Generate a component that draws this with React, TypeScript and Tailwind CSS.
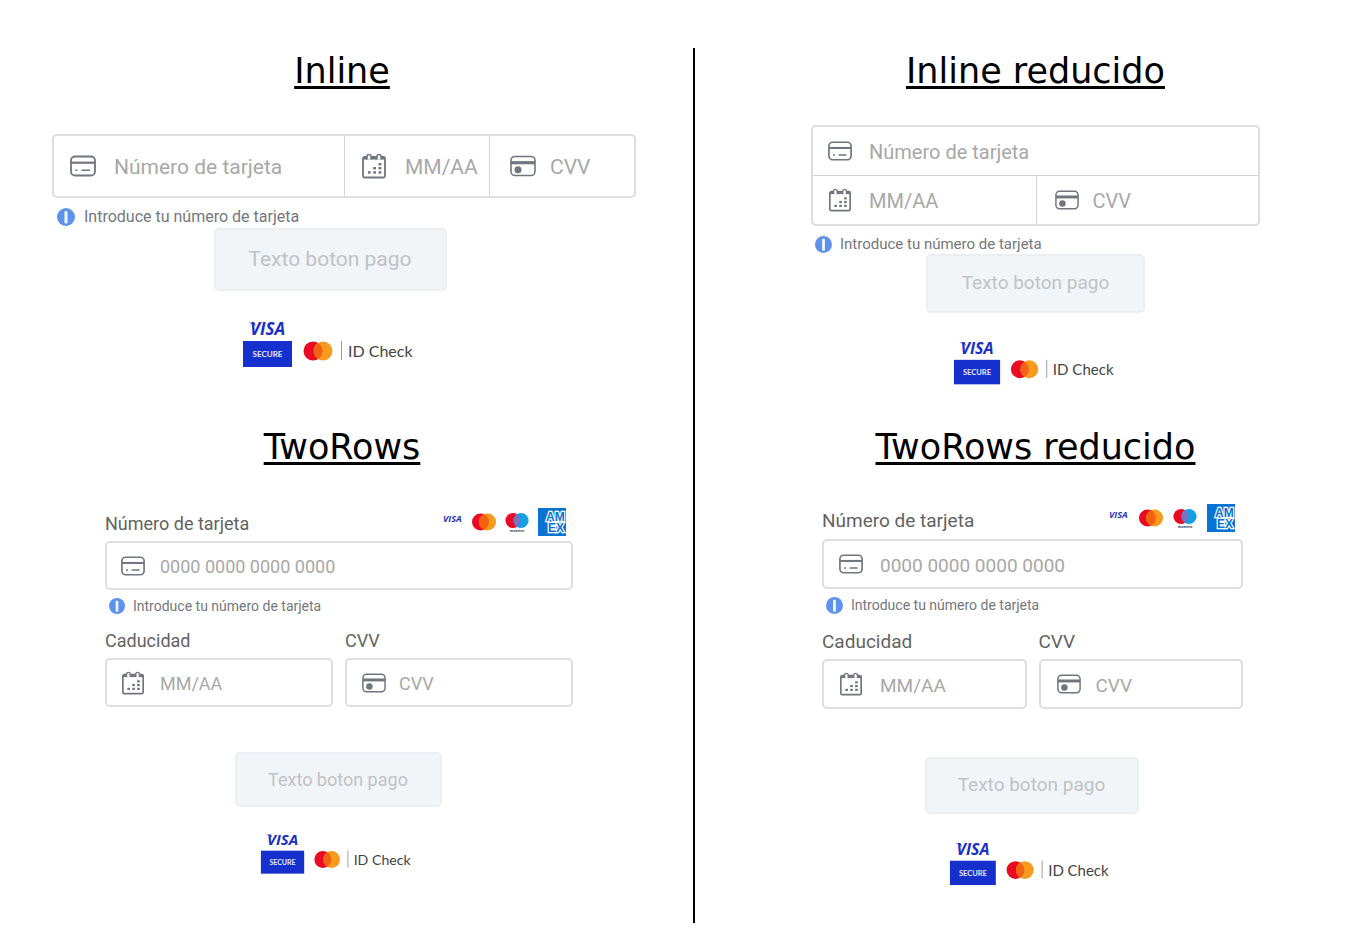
import type { ReactNode } from "react"
import clsx from "clsx"

type Size = {
  field: string
  lead: string
  cvvLead: string
  icon: string
  hint: string
  hintIcon: string
  button: string
  badge: string
}

type RowsSize = Size & {
  label: string
  labelRow: string
  brands: string
  secondRow: string
}

const inline: Size = {
  field: "h-[60px] text-[21px]",
  lead: "pl-4 gap-[18px]",
  cvvLead: "pl-5 gap-3.5",
  icon: "size-[26px]",
  hint: "mt-2 ml-[5px] gap-[9px] text-base leading-[22px]",
  hintIcon: "size-[18px]",
  button: "h-[63px] w-[233px] text-[21px]",
  badge: "mt-[30px] w-[172px]",
}

const inlineReduced: Size = {
  field: "h-12 text-xl",
  lead: "pl-[15px] gap-[17px]",
  cvvLead: "pl-[18px] gap-3.5",
  icon: "size-6",
  hint: "mt-2 ml-1 gap-2 text-[15px] leading-5",
  hintIcon: "size-[17px]",
  button: "h-[59px] w-[219px] text-[19px]",
  badge: "mt-7 w-[162px]",
}

const rows: RowsSize = {
  field: "h-[45px] text-lg",
  lead: "pl-3.5 gap-[15px]",
  cvvLead: "pl-[15px] gap-[13px]",
  icon: "size-6",
  hint: "mt-[7px] ml-1 gap-2 text-sm leading-[18px]",
  hintIcon: "size-4",
  button: "mt-[45px] h-[55px] w-[207px] text-lg",
  badge: "mt-[26px] w-[152px]",
  label: "text-lg leading-6",
  labelRow: "mb-[5px] pr-[7px]",
  brands: "gap-[9px]",
  secondRow: "mt-3.5",
}

const rowsReduced: RowsSize = {
  field: "h-[46px] text-[19px]",
  lead: "pl-[15px] gap-[17px]",
  cvvLead: "pl-4 gap-[15px]",
  icon: "size-6",
  hint: "mt-[7px] ml-1 gap-2 text-sm leading-[18px]",
  hintIcon: "size-[17px]",
  button: "mt-12 h-[57px] w-[214px] text-[19px]",
  badge: "mt-7 w-[161px]",
  label: "text-[19px] leading-[22px]",
  labelRow: "mb-[7px] pr-2",
  brands: "gap-2.5",
  secondRow: "mt-[17px]",
}

function CardIcon({ className }: { className: string }) {
  return (
    <svg viewBox="0 0 26 26" fill="none" stroke="#70757e" className={className} aria-hidden="true">
      <rect x="1" y="3.5" width="24" height="19" rx="4" strokeWidth="1.800" />
      <path d="M1 9.700h24" strokeWidth="2.200" />
      <path d="M5.500 17.300h2M11.500 17.300h8.500" strokeWidth="1.600" />
    </svg>
  )
}

function CalendarIcon({ className }: { className: string }) {
  return (
    <svg viewBox="0 0 26 26" fill="none" stroke="#70757e" className={className} aria-hidden="true">
      <rect x="2" y="4" width="22" height="20.500" rx="1.500" strokeWidth="1.800" />
      <path d="M2 5.500h22" strokeWidth="2.200" />
      <path d="M6 6.500V3.500a2 2 0 0 1 4 0V6.500M16 6.500V3.500a2 2 0 0 1 4 0V6.500" fill="#fff" strokeWidth="1.500" />
      <g fill="#70757e" stroke="none">
        <rect x="17.500" y="10" width="2.800" height="2.400" />
        <rect x="12.200" y="14" width="2.800" height="2.400" />
        <rect x="17.500" y="14" width="2.800" height="2.400" />
        <rect x="6.900" y="18.200" width="2.800" height="2.400" />
        <rect x="12.200" y="18.200" width="2.800" height="2.400" />
        <rect x="17.500" y="18.200" width="2.800" height="2.400" />
      </g>
    </svg>
  )
}

function CvvIcon({ className }: { className: string }) {
  return (
    <svg viewBox="0 0 26 26" fill="none" stroke="#70757e" className={className} aria-hidden="true">
      <rect x="1" y="3.500" width="24" height="19" rx="4" strokeWidth="1.600" />
      <path d="M1 9.700h24" strokeWidth="3.200" />
      <circle cx="8" cy="16.800" r="3.500" fill="#70757e" stroke="none" />
    </svg>
  )
}

function SecureBadges({ className }: { className: string }) {
  return (
    <svg viewBox="0 0 172 47" className={className} role="img" aria-label="Visa Secure, Mastercard ID Check">
      <text x="8" y="14" fill="#1a2fc4" fontFamily="'Open Sans', sans-serif" fontSize="17" fontWeight="700" fontStyle="italic">
        VISA
      </text>
      <path d="M6.500 1.700h6l1.300 3.300c-2-1.800-4.500-2.700-7.300-3.300z" fill="#1a2fc4" />
      <rect x="1" y="20" width="49" height="26" fill="#1530cc" />
      <text x="25.500" y="36" textAnchor="middle" fill="#e4e8fb" fontFamily="Lato, sans-serif" fontSize="8" fontWeight="700">
        SECURE
      </text>
      <circle cx="71" cy="30" r="9.500" fill="#eb0a24" />
      <circle cx="81" cy="30" r="9.500" fill="#f79a1d" />
      <path d="M76 21.900a9.500 9.500 0 0 1 0 16.200a9.500 9.500 0 0 1 0-16.200z" fill="#f26213" />
      <path d="M99.500 20v19" stroke="#999" />
      <text x="106" y="36" fill="#444" fontFamily="Lato, sans-serif" fontSize="16">
        ID Check
      </text>
    </svg>
  )
}

function CardBrands({ className }: { className: string }) {
  return (
    <div className={clsx("flex items-center", className)}>
      <svg viewBox="0 0 21 28" className="h-7 w-[21px]" role="img" aria-label="Visa">
        <text x="1" y="14" fill="#2736b5" fontFamily="'Open Sans', sans-serif" fontSize="9" fontWeight="700" fontStyle="italic">
          VISA
        </text>
      </svg>
      <svg viewBox="0 0 24 28" className="h-7 w-6" role="img" aria-label="Mastercard">
        <circle cx="8.500" cy="14" r="8.500" fill="#eb0a24" />
        <circle cx="15.500" cy="14" r="8.500" fill="#f79a1d" />
        <path d="M12 6.300a8.500 8.500 0 0 1 0 15.400a8.500 8.500 0 0 1 0-15.400z" fill="#f4610f" />
      </svg>
      <svg viewBox="0 0 24 28" className="h-7 w-6" role="img" aria-label="Maestro">
        <circle cx="8" cy="12.500" r="7.600" fill="#eb0a24" />
        <circle cx="16" cy="12.500" r="7.600" fill="#16a0e4" />
        <path d="M12 6.100a7.600 7.600 0 0 1 0 12.800a7.600 7.600 0 0 1 0-12.800z" fill="#7673c0" />
        <text x="12" y="24" textAnchor="middle" fill="#333" fontFamily="Lato, sans-serif" fontSize="4" fontWeight="700">
          maestro
        </text>
      </svg>
      <svg viewBox="0 0 28 28" className="size-7" role="img" aria-label="American Express">
        <rect width="28" height="28" fill="#0873d3" />
        <text
          fill="#0873d3"
          stroke="#fff"
          strokeWidth="2.400"
          paintOrder="stroke"
          fontFamily="'Liberation Sans', sans-serif"
          fontSize="12"
          fontWeight="700"
        >
          <tspan x="8" y="13">AM</tspan>
          <tspan x="10" y="23.500">EX</tspan>
        </text>
      </svg>
    </div>
  )
}

const icons = { card: CardIcon, date: CalendarIcon, cvv: CvvIcon }

type FieldProps = {
  id?: string
  label?: string
  placeholder: string
  kind: keyof typeof icons
  size: Size
  className?: string
}

function Field({ id, label, placeholder, kind, size, className }: FieldProps) {
  const Icon = icons[kind]

  return (
    <div className={clsx("flex min-w-0 items-center", size.field, kind === "cvv" ? size.cvvLead : size.lead, className)}>
      <Icon className={clsx("shrink-0", size.icon)} />
      <input
        id={id}
        type="text"
        aria-label={label}
        placeholder={placeholder}
        className="h-full w-full min-w-0 flex-1 bg-transparent pt-0.5 outline-none placeholder:text-[#a8a8a8]"
      />
    </div>
  )
}

function Hint({ size }: { size: Size }) {
  return (
    <p className={clsx("flex items-center text-[#74777d]", size.hint)}>
      <svg viewBox="0 0 18 18" className={clsx("shrink-0", size.hintIcon)} aria-hidden="true">
        <circle cx="9" cy="9" r="9" fill="#5e92ee" />
        <rect x="7.500" y="3" width="3" height="12.500" rx="1" fill="#f3f7ff" />
      </svg>
      Introduce tu número de tarjeta
    </p>
  )
}

function Actions({ size, className }: { size: Size; className?: string }) {
  return (
    <div className={clsx("flex flex-col items-center", className)}>
      <button type="button" className={clsx("rounded-[5px] border-2 border-[#ebeef3] bg-[#f2f5f8] text-[#bfc2c6]", size.button)}>
        Texto boton pago
      </button>
      <div className="pr-1">
        <SecureBadges className={size.badge} />
      </div>
    </div>
  )
}

function Title({ children }: { children: ReactNode }) {
  return (
    <h2 className="text-center font-['DejaVu_Sans',sans-serif] text-[35px] leading-10 text-black underline decoration-[3px] underline-offset-[3px]">
      {children}
    </h2>
  )
}

function InlineForm() {
  return (
    <form className="mt-[43px] ml-1">
      <div className="grid grid-cols-[2fr_1fr_1fr] rounded-[5px] border-2 border-[#dedede]">
        <Field label="Número de tarjeta" placeholder="Número de tarjeta" kind="card" size={inline} />
        <Field label="Caducidad" placeholder="MM/AA" kind="date" size={inline} className="border-l border-[#d6d6d6]" />
        <Field label="CVV" placeholder="CVV" kind="cvv" size={inline} className="border-l border-[#d6d6d6]" />
      </div>
      <Hint size={inline} />
      <Actions size={inline} className="pr-7" />
    </form>
  )
}

function InlineReducedForm() {
  return (
    <form className="mt-[34px]">
      <div className="rounded-[5px] border-2 border-[#dedede]">
        <Field label="Número de tarjeta" placeholder="Número de tarjeta" kind="card" size={inlineReduced} />
        <div className="grid grid-cols-2 border-t border-[#d2d2d2]">
          <Field label="Caducidad" placeholder="MM/AA" kind="date" size={inlineReduced} />
          <Field label="CVV" placeholder="CVV" kind="cvv" size={inlineReduced} className="border-l border-[#d6d6d6]" />
        </div>
      </div>
      <Hint size={inlineReduced} />
      <Actions size={inlineReduced} />
    </form>
  )
}

function TwoRowsForm({ id, size, className }: { id: string; size: RowsSize; className: string }) {
  const box = "rounded-[5px] border-2 border-[#dedede]"

  return (
    <form className={className}>
      <div className={clsx("flex items-end justify-between", size.labelRow)}>
        <label htmlFor={`${id}-card`} className={size.label}>
          Número de tarjeta
        </label>
        <CardBrands className={size.brands} />
      </div>
      <div className={box}>
        <Field id={`${id}-card`} placeholder="0000 0000 0000 0000" kind="card" size={size} />
      </div>
      <Hint size={size} />
      <div className={clsx("grid grid-cols-2 gap-3", size.secondRow)}>
        <div>
          <label htmlFor={`${id}-date`} className={size.label}>
            Caducidad
          </label>
          <div className={clsx("mt-1", box)}>
            <Field id={`${id}-date`} placeholder="MM/AA" kind="date" size={size} />
          </div>
        </div>
        <div>
          <label htmlFor={`${id}-cvv`} className={size.label}>
            CVV
          </label>
          <div className={clsx("mt-1", box)}>
            <Field id={`${id}-cvv`} placeholder="CVV" kind="cvv" size={size} />
          </div>
        </div>
      </div>
      <Actions size={size} className="pr-0.5" />
    </form>
  )
}

export default function App() {
  return (
    <main className="grid grid-cols-[695fr_652fr] bg-white pt-12 font-[Roboto,sans-serif] text-[#636363]">
      <div className="border-r-2 border-black pt-[3px] pr-[57px] pb-12 pl-12">
        <section className="min-h-[376px]">
          <Title>Inline</Title>
          <InlineForm />
        </section>
        <section>
          <Title>TwoRows</Title>
          <TwoRowsForm id="rows" size={rows} className="mt-[41px] mr-[63px] ml-[57px]" />
        </section>
      </div>
      <div className="pt-[3px] pr-[87px] pl-[116px]">
        <section className="min-h-[376px]">
          <Title>Inline reducido</Title>
          <InlineReducedForm />
        </section>
        <section>
          <Title>TwoRows reducido</Title>
          <TwoRowsForm id="rows-reduced" size={rowsReduced} className="mt-[37px] mr-[17px] ml-[11px]" />
        </section>
      </div>
    </main>
  )
}
